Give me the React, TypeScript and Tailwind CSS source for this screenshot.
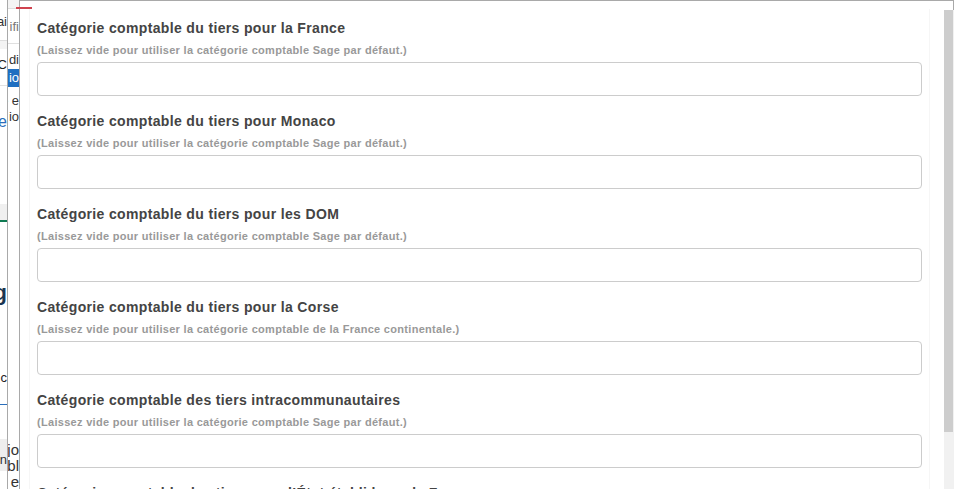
const fields = [
  {
    label: 'Catégorie comptable du tiers pour la France',
    hint: '(Laissez vide pour utiliser la catégorie comptable Sage par défaut.)',
  },
  {
    label: 'Catégorie comptable du tiers pour Monaco',
    hint: '(Laissez vide pour utiliser la catégorie comptable Sage par défaut.)',
  },
  {
    label: 'Catégorie comptable du tiers pour les DOM',
    hint: '(Laissez vide pour utiliser la catégorie comptable Sage par défaut.)',
  },
  {
    label: 'Catégorie comptable du tiers pour la Corse',
    hint: '(Laissez vide pour utiliser la catégorie comptable de la France continentale.)',
  },
  {
    label: 'Catégorie comptable des tiers intracommunautaires',
    hint: '(Laissez vide pour utiliser la catégorie comptable Sage par défaut.)',
  },
  {
    label: 'Catégorie comptable des tiers pour l’État établi hors de France',
    hint: '(Laissez vide pour utiliser la catégorie comptable Sage par défaut.)',
  },
];

// clipped fragment of the page behind the modal
function Frag({ text, className = '' }: { text: string; className?: string }) {
  return (
    <div className={`flex justify-end overflow-hidden whitespace-nowrap text-[13px] leading-[16px] ${className}`}>
      <span>{text}</span>
    </div>
  );
}

export default function App() {
  return (
    <div className="relative flex h-[489px] w-[954px] overflow-hidden bg-white font-['Liberation_Sans',Arial,sans-serif]">
      {/* Background page, left edge */}
      <div className="flex w-[7px] shrink-0 flex-col bg-white text-[#333]">
        <Frag text="Modifier le mai" className="mt-[14px]" />
        <div className="mt-[10px] h-[9px] border-t border-[#ddd] bg-[#f3f3f3]" />
        <Frag text="ACC" className="mt-[8px] text-[#222]" />
        <div className="mt-[12px] h-px bg-[#e2e2e2]" />
        <Frag text="ce" className="mt-[28px] text-[16px] text-[#2a6ebb]" />
        <div className="mt-[10px] h-[4px] bg-white" />
        <div className="mt-[60px] h-[16px] bg-[#f0f0f0]" />
        <div className="h-[2px] bg-[#0e7a52]" />
        <Frag text="g" className="mt-[58px] text-[22px] font-bold leading-[26px] text-[#1b3550]" />
        <Frag text="Nc" className="mt-[64px] text-[#222]" />
        <div className="mt-[18px] h-px bg-[#2a6ebb]" />
        <div className="mt-[34px] h-[32px] bg-[#eeeeee] pt-[13px]">
          <Frag text="on" className="text-[#333]" />
        </div>
      </div>
      <div className="w-px shrink-0 bg-[#a9a9a9]" />
      <div className="flex w-[11px] shrink-0 flex-col bg-white text-[#333]">
        <div className="h-[10px] border-b border-[#ddd] bg-[#f4f4f4]" />
        <Frag text="ifi" className="mt-[10px] text-[#777]" />
        <div className="mt-[8px] h-px bg-[#e0e0e0]" />
        <Frag text="di" className="mt-[8px]" />
        <div className="mt-[2px] bg-[#1f6fc1] py-px">
          <Frag text="io" className="text-white" />
        </div>
        <Frag text="e e" className="mt-[6px]" />
        <Frag text="io" className="mt-px" />
        <Frag text="jo" className="mt-[318px] text-[15px]" />
        <Frag text="bl" className="mt-[1px] text-[15px]" />
        <Frag text="e" className="mt-[1px] text-[15px]" />
      </div>

      {/* Modal */}
      <div className="relative flex min-w-0 flex-1 border-l border-t border-[#a9a9a9] pt-[8px]">
        <div className="ml-[9px] flex w-[901px] shrink-0 flex-col border-x border-[#f6f6f6] px-[7px] pt-[9px]">
          {fields.map((f) => (
            <div key={f.label} className="flex flex-col pb-[15px]">
              <label className="text-[14px] font-bold leading-[20px] tracking-[0.35px] text-[#444]">{f.label}</label>
              <span className="mt-[4px] text-[11px] font-bold leading-[16px] tracking-[0.3px] text-[#999]">{f.hint}</span>
              <input
                type="text"
                className="mt-[4px] h-[34px] w-full rounded-[4px] border border-[#cccccc] bg-white px-3 text-[14px] outline-none"
              />
            </div>
          ))}
        </div>
        <div className="flex-1" />
        {/* scrollbar */}
        <div className="flex w-[10px] shrink-0 flex-col">
          <div className="-mt-[8px] h-[9px] border-r border-[#a9a9a9]" />
          <div className="flex flex-1 flex-col bg-[#f1f1f1] pr-px">
            <div className="h-[422px] bg-[#cdcdcd]" />
          </div>
        </div>
      </div>

      {/* red accent on modal corner */}
      <div className="absolute left-[16px] top-[7px] h-[2px] w-[16px] bg-[#d0434f]" />
    </div>
  );
}
